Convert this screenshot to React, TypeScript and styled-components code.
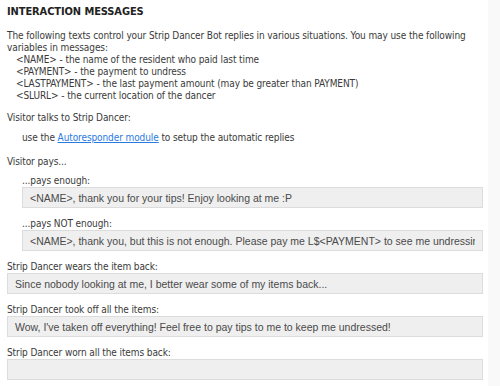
import React from 'react';
import styled, { createGlobalStyle } from 'styled-components';

const GlobalStyle = createGlobalStyle`
  body {
    margin: 0;
    background: #fff;
  }
`;

const Page = styled.div`
  display: flex;
  min-height: 386px;
`;

const Main = styled.div`
  flex: 1;
  padding: 4px 5px 0 7px;
  font-family: "DejaVu Sans Condensed", Tahoma, "DejaVu Sans", sans-serif;
  font-size: 10px;
  letter-spacing: -0.1px;
  line-height: 12px;
  color: #3a3a3a;
`;

const SideStrip = styled.div`
  width: 12px;
  background: #f9f9f9;
`;

const Title = styled.h2`
  margin: 0 0 10px;
  font-size: 11px;
  letter-spacing: -0.1px;
  line-height: 16px;
  font-weight: bold;
  color: #222;
`;

const Para = styled.p<{ $gap?: number; $indent?: number; $top?: number }>`
  margin: ${(p) => p.$top ?? 0}px 0 ${(p) => p.$gap ?? 0}px ${(p) => p.$indent ?? 0}px;
`;

const VarLine = styled.div`
  padding-left: 9px;
`;

const Link = styled.a`
  color: #2a7ae2;
  text-decoration: underline;
`;

const Field = styled.div<{ $indent?: boolean }>`
  margin: 0 0 10px ${(p) => (p.$indent ? 15 : 0)}px;
`;

const Label = styled.div`
  line-height: 12px;
`;

const MessageBox = styled.input`
  display: block;
  box-sizing: border-box;
  width: 100%;
  height: 21px;
  margin: 0;
  padding: 0 7px;
  border: 1px solid #dcdcdc;
  background: #efefef;
  font-family: "Liberation Sans", Arial, sans-serif;
  font-size: 10.5px;
  letter-spacing: 0;
  color: #4a4a4a;
  outline: none;
`;

const vars = [
  ['<NAME>', 'the name of the resident who paid last time'],
  ['<PAYMENT>', 'the payment to undress'],
  ['<LASTPAYMENT>', 'the last payment amount (may be greater than PAYMENT)'],
  ['<SLURL>', 'the current location of the dancer'],
];

const fields = [
  { label: '...pays enough:', value: '<NAME>, thank you for your tips! Enjoy looking at me :P', indent: true },
  { label: '...pays NOT enough:', value: '<NAME>, thank you, but this is not enough. Please pay me L$<PAYMENT> to see me undressing', indent: true },
  { label: 'Strip Dancer wears the item back:', value: 'Since nobody looking at me, I better wear some of my items back...' },
  { label: 'Strip Dancer took off all the items:', value: "Wow, I've taken off everything! Feel free to pay tips to me to keep me undressed!" },
  { label: 'Strip Dancer worn all the items back:', value: '' },
];

export default function App() {
  return (
    <>
      <GlobalStyle />
      <Page>
        <Main>
          <Title>INTERACTION MESSAGES</Title>
          <Para>
            The following texts control your Strip Dancer Bot replies in various situations. You may use the following
            variables in messages:
          </Para>
          {vars.map(([k, v]) => (
            <VarLine key={k}>
              {k} - {v}
            </VarLine>
          ))}
          <Para $gap={8} $top={10}>Visitor talks to Strip Dancer:</Para>
          <Para $gap={12} $indent={15}>
            use the <Link href="#">Autoresponder module</Link> to setup the automatic replies
          </Para>
          <Para $gap={7}>Visitor pays...</Para>
          {fields.map((f) => (
            <Field key={f.label} $indent={f.indent}>
              <Label>{f.label}</Label>
              <MessageBox defaultValue={f.value} readOnly />
            </Field>
          ))}
        </Main>
        <SideStrip />
      </Page>
    </>
  );
}
